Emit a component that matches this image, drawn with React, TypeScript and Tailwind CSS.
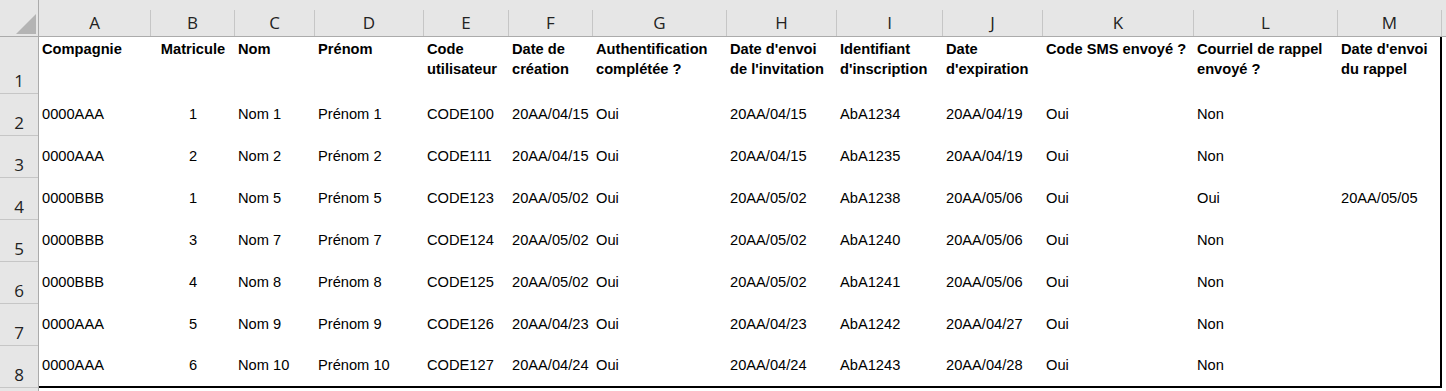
import React from "react";

type Col = { letter: string; w: string; header: string[]; align: "left" | "center" };

const cols: Col[] = [
  { letter: "A", w: "w-[112px]", header: ["Compagnie"], align: "left" },
  { letter: "B", w: "w-[84px]", header: ["Matricule"], align: "center" },
  { letter: "C", w: "w-[80px]", header: ["Nom"], align: "left" },
  { letter: "D", w: "w-[109px]", header: ["Prénom"], align: "left" },
  { letter: "E", w: "w-[85px]", header: ["Code", "utilisateur"], align: "left" },
  { letter: "F", w: "w-[84px]", header: ["Date de", "création"], align: "left" },
  { letter: "G", w: "w-[134px]", header: ["Authentification", "complétée ?"], align: "left" },
  { letter: "H", w: "w-[110px]", header: ["Date d'envoi", "de l'invitation"], align: "left" },
  { letter: "I", w: "w-[106px]", header: ["Identifiant", "d'inscription"], align: "left" },
  { letter: "J", w: "w-[100px]", header: ["Date", "d'expiration"], align: "left" },
  { letter: "K", w: "w-[151px]", header: ["Code SMS envoyé ?"], align: "left" },
  { letter: "L", w: "w-[144px]", header: ["Courriel de rappel", "envoyé ?"], align: "left" },
  { letter: "M", w: "w-[104px]", header: ["Date d'envoi", "du rappel"], align: "left" },
];

const rows: string[][] = [
  ["0000AAA", "1", "Nom 1", "Prénom 1", "CODE100", "20AA/04/15", "Oui", "20AA/04/15", "AbA1234", "20AA/04/19", "Oui", "Non", ""],
  ["0000AAA", "2", "Nom 2", "Prénom 2", "CODE111", "20AA/04/15", "Oui", "20AA/04/15", "AbA1235", "20AA/04/19", "Oui", "Non", ""],
  ["0000BBB", "1", "Nom 5", "Prénom 5", "CODE123", "20AA/05/02", "Oui", "20AA/05/02", "AbA1238", "20AA/05/06", "Oui", "Oui", "20AA/05/05"],
  ["0000BBB", "3", "Nom 7", "Prénom 7", "CODE124", "20AA/05/02", "Oui", "20AA/05/02", "AbA1240", "20AA/05/06", "Oui", "Non", ""],
  ["0000BBB", "4", "Nom 8", "Prénom 8", "CODE125", "20AA/05/02", "Oui", "20AA/05/02", "AbA1241", "20AA/05/06", "Oui", "Non", ""],
  ["0000AAA", "5", "Nom 9", "Prénom 9", "CODE126", "20AA/04/23", "Oui", "20AA/04/23", "AbA1242", "20AA/04/27", "Oui", "Non", ""],
  ["0000AAA", "6", "Nom 10", "Prénom 10", "CODE127", "20AA/04/24", "Oui", "20AA/04/24", "AbA1243", "20AA/04/28", "Oui", "Non", ""],
];

const uiFont = { fontFamily: '"Open Sans", "Noto Sans", sans-serif' };
const cellFont = { fontFamily: '"Liberation Sans", Arial, sans-serif' };

export default function App() {
  return (
    <div className="w-[1446px] h-[391px] bg-white overflow-hidden flex flex-col">
      {/* Column header bar */}
      <div className="flex h-[37px] bg-[#e6e6e6] border-b border-[#ababab] shrink-0" style={uiFont}>
        <div className="w-[39px] shrink-0 relative border-r border-[#ababab]">
          <svg className="absolute left-[16px] top-[14px]" width="20" height="20" viewBox="0 0 20 20">
            <polygon points="20,0 20,20 0,20" fill="#b4b4b4" />
          </svg>
        </div>
        {cols.map((c) => (
          <div key={c.letter} className={`${c.w} shrink-0 flex flex-col pt-[10px]`}>
            <div className="flex-1 flex items-center justify-center border-r border-[#c6c6c6] text-[17px] text-[#222] leading-none pb-[1px]">
              {c.letter}
            </div>
          </div>
        ))}
        <div className="flex-1" />
      </div>

      <div className="flex flex-1">
        {/* Row headers */}
        <div className="w-[39px] shrink-0 bg-[#e6e6e6] border-r border-[#ababab] flex flex-col" style={uiFont}>
          {["1", "2", "3", "4", "5", "6", "7", "8"].map((n, i) => (
            <div
              key={n}
              className={`${i === 0 ? "h-[57px]" : "h-[42px]"} shrink-0 flex items-end justify-center border-b border-[#c6c6c6] text-[17px] text-[#222] leading-[20px] pb-[2px]`}
            >
              {n}
            </div>
          ))}
          <div className="flex-1" />
        </div>

        {/* Data */}
        <div className="flex flex-col items-start" style={cellFont}>
          <div className="border-r-2 border-b-2 border-black flex flex-col text-[14.67px] text-black">
            <div className="flex h-[57px]">
              {cols.map((c, ci) => (
                <div
                  key={c.letter}
                  className={`${ci === cols.length - 1 ? "w-[102px]" : c.w} shrink-0 font-bold leading-[20px] pt-[2px] px-[3px] whitespace-nowrap ${c.align === "center" ? "text-center" : "text-left"}`}
                >
                  {c.header.map((l) => (
                    <div key={l}>{l}</div>
                  ))}
                </div>
              ))}
            </div>
            {rows.map((r, ri) => (
              <div key={ri} className={`flex ${ri === rows.length - 1 ? "h-[40px]" : "h-[42px]"}`}>
                {r.map((v, ci) => (
                  <div
                    key={ci}
                    className={`${ci === cols.length - 1 ? "w-[102px]" : cols[ci].w} shrink-0 flex items-center pb-[2px] px-[3px] whitespace-nowrap ${cols[ci].align === "center" ? "justify-center" : "justify-start"}`}
                  >
                    {v}
                  </div>
                ))}
              </div>
            ))}
          </div>
        </div>
      </div>
    </div>
  );
}
